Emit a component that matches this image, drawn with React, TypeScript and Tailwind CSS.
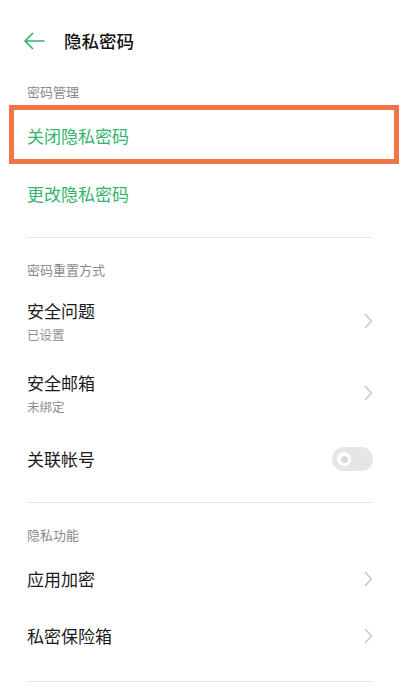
const green = "text-[#35b36d]";

const Chevron = () => (
  <svg width="9" height="16" viewBox="0 0 9 16" fill="none">
    <path d="M1.5 1.5L7.5 8L1.5 14.5" stroke="#c4c4c4" strokeWidth="1.3" strokeLinecap="round" strokeLinejoin="round" />
  </svg>
);

const Label = ({ text }: { text: string }) => (
  <div className="h-[47px] pl-[27px] pt-[22px] text-[13px] leading-[20px] text-[#8a8a8a]">{text}</div>
);

const Divider = ({ mt }: { mt: string }) => <div className={`${mt} ml-[27px] mr-[33px] h-px bg-[#e6e6e6]`} />;

const App = () => {
  return (
    <div
      className="w-[405px] h-[698px] bg-white overflow-hidden"
      style={{ fontFamily: '"Noto Sans CJK SC", "Noto Sans", sans-serif' }}
    >
      {/* header */}
      <div className="flex h-[82px] items-center pl-[23px]">
        <svg width="22" height="18" viewBox="0 0 22 18" fill="none">
          <path d="M21 9H2M9.5 1.5L2 9l7.5 7.5" stroke="#35b36d" strokeWidth="1.7" strokeLinecap="round" strokeLinejoin="round" />
        </svg>
        <h1 className="ml-[19px] text-[17.5px] font-medium leading-none text-[#111]">隐私密码</h1>
      </div>

      <div className="h-[25px] pl-[27px] text-[13px] leading-[20px] text-[#8a8a8a]">密码管理</div>

      <div className="relative flex h-[58px] items-center pl-[27px] pr-[32px]">
        <span className={`text-[17px] ${green}`}>关闭隐私密码</span>
        <div className="absolute -top-[2px] bottom-[1px] left-[9px] right-[6px] border-[5px] border-[#ef7446]" />
      </div>
      <div className="flex h-[58px] items-center pl-[27px] pr-[32px]">
        <span className={`text-[17px] ${green}`}>更改隐私密码</span>
      </div>

      <Divider mt="mt-[14px]" />
      <Label text="密码重置方式" />

      {[
        { title: "安全问题", sub: "已设置" },
        { title: "安全邮箱", sub: "未绑定" },
      ].map((item) => (
        <div key={item.title} className="flex h-[72px] items-center justify-between pl-[27px] pr-[32px]">
          <div className="flex flex-col gap-[3px]">
            <span className="text-[17px] leading-[24px] text-[#1a1a1a]">{item.title}</span>
            <span className="text-[12.5px] leading-[18px] text-[#8f8f8f]">{item.sub}</span>
          </div>
          <Chevron />
        </div>
      ))}

      <div className="flex h-[60px] items-center justify-between pl-[27px] pr-[32px]">
        <span className="text-[17px] text-[#1a1a1a]">关联帐号</span>
        <div className="flex h-[24px] w-[41px] items-center rounded-full bg-[#e6e6e6] pl-[5px]">
          <div className="flex h-[14px] w-[14px] items-center justify-center rounded-full bg-white">
            <div className="h-[7px] w-[7px] rounded-full bg-[#d9d9d9]" />
          </div>
        </div>
      </div>

      <Divider mt="mt-[13px]" />
      <Label text="隐私功能" />

      {["应用加密", "私密保险箱"].map((t) => (
        <div key={t} className="flex h-[57px] items-center justify-between pl-[27px] pr-[32px]">
          <span className="text-[17px] text-[#1a1a1a]">{t}</span>
          <Chevron />
        </div>
      ))}

      <Divider mt="mt-[17px]" />
    </div>
  );
};

export default App;
